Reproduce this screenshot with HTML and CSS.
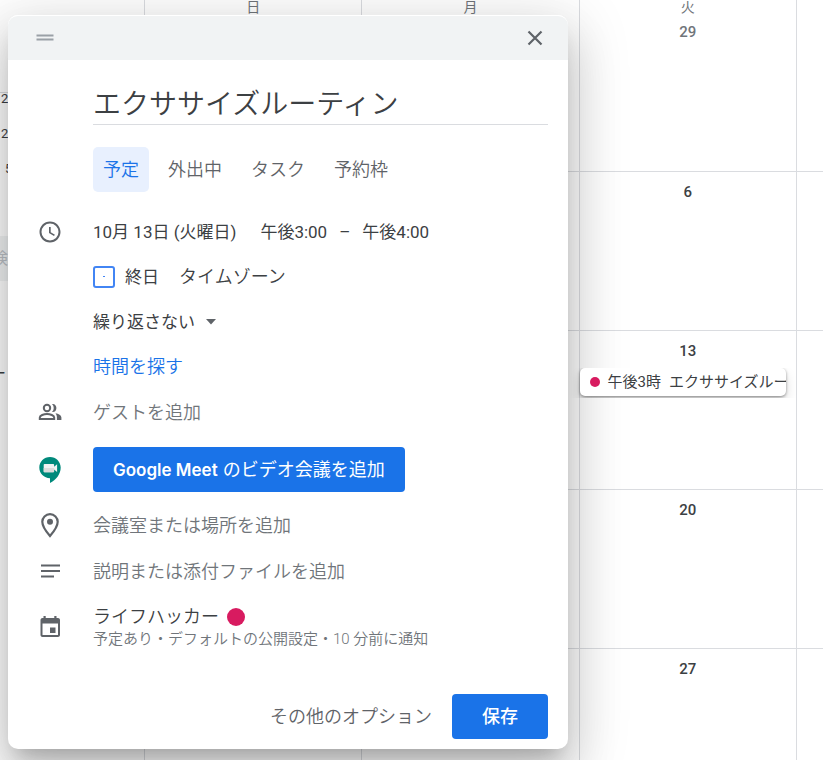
FILE: index.html
```html
<!DOCTYPE html>
<html lang="ja">
<head>
    <meta charset="UTF-8">
    <meta name="viewport" content="width=device-width, initial-scale=1.0">
    <title>カレンダー</title>
    <link rel="stylesheet" href="styles.css">
</head>
<body>
    <div class="app">
        <aside class="sidebar">
            <div class="mini-month">
                <span>2</span>
                <span>2</span>
                <span class="mini-late">5</span>
            </div>
            <input class="people-search" type="text" placeholder="検索" aria-label="検索">
            <div class="sidebar-title">ー</div>
        </aside>

        <main class="month">
            <!-- Week 1 -->
            <div class="week week-first">
                <div class="day"><span class="weekday">日</span></div>
                <div class="day"><span class="weekday">月</span></div>
                <div class="day"><span class="weekday">火</span><span class="date date-other">29</span></div>
                <div class="day"></div>
            </div>
            <!-- Week 2 -->
            <div class="week">
                <div class="day"></div>
                <div class="day"></div>
                <div class="day"><span class="date">6</span></div>
                <div class="day"></div>
            </div>
            <!-- Week 3 -->
            <div class="week">
                <div class="day"></div>
                <div class="day"></div>
                <div class="day">
                    <span class="date">13</span>
                    <button class="event" type="button">
                        <span class="event-dot"></span>
                        <span>午後3時</span>
                        <span class="event-name">エクササイズルーティン</span>
                    </button>
                </div>
                <div class="day"></div>
            </div>
            <!-- Week 4 -->
            <div class="week">
                <div class="day"></div>
                <div class="day"></div>
                <div class="day"><span class="date">20</span></div>
                <div class="day"></div>
            </div>
            <!-- Week 5 -->
            <div class="week week-last">
                <div class="day"></div>
                <div class="day"></div>
                <div class="day"><span class="date">27</span></div>
                <div class="day"></div>
            </div>
        </main>
    </div>

    <form class="popup">
        <header class="popup-bar">
            <svg class="drag" width="18" height="8" viewBox="0 0 18 8" aria-hidden="true">
                <path d="M0.5 1.5h17M0.5 5.5h17" stroke="#9aa0a6" stroke-width="2"/>
            </svg>
            <button class="close" type="button" aria-label="閉じる">
                <svg width="16" height="16" viewBox="0 0 16 16">
                    <path d="M1.500 1.500l13 13M14.500 1.500l-13 13" stroke="#5f6368" stroke-width="2.200"/>
                </svg>
            </button>
        </header>

        <div class="popup-body">
            <div class="indent">
                <input class="title" type="text" value="エクササイズルーティン" aria-label="タイトル">
                <div class="tabs">
                    <button class="tab active" type="button">予定</button>
                    <button class="tab" type="button">外出中</button>
                    <button class="tab" type="button">タスク</button>
                    <button class="tab" type="button">予約枠</button>
                </div>
            </div>

            <div class="row">
                <div class="row-icon">
                    <svg width="24" height="24" viewBox="0 0 24 24" fill="#5f6368">
                        <path d="M12 1.500C6.200 1.500 1.500 6.200 1.500 12S6.200 22.500 12 22.500 22.500 17.800 22.500 12 17.800 1.500 12 1.500zm0 19a8.500 8.500 0 1 1 0-17 8.500 8.500 0 0 1 0 17z"/>
                        <path d="M12.700 7h-1.700v6l5 3.100.900-1.400-4.200-2.500z"/>
                    </svg>
                </div>
                <div class="when">
                    <button class="plain" type="button">10月 13日 (火曜日)</button>
                    <div class="times">
                        <button class="plain" type="button">午後3:00</button>
                        <span class="dash">–</span>
                        <button class="plain" type="button">午後4:00</button>
                    </div>
                </div>
            </div>

            <div class="row indent">
                <label class="all-day">
                    <input type="checkbox">
                    終日
                </label>
                <button class="light" type="button">タイムゾーン</button>
            </div>

            <div class="row indent">
                <div class="repeat">
                    <select aria-label="繰り返し">
                        <option>繰り返さない</option>
                    </select>
                    <svg width="12" height="6" viewBox="0 0 12 6" fill="#5f6368" aria-hidden="true">
                        <path d="M1 0h10L6 5.500z"/>
                    </svg>
                </div>
            </div>

            <div class="row indent">
                <a class="find-time" href="#">時間を探す</a>
            </div>

            <div class="row row-field">
                <div class="row-icon">
                    <svg width="24" height="24" viewBox="0 0 24 24" fill="none" stroke="#5f6368" stroke-width="2">
                        <circle cx="9" cy="8" r="3.200"/>
                        <path d="M1.800 19v-1.500c0-2 4-3.500 7.200-3.500s7.200 1.500 7.200 3.500V19z"/>
                        <path d="M14 4c2.600-.5 4.400 1.500 4.400 4s-1.800 4.500-4.400 4c1.200-1.100 1.700-2.500 1.700-4S15.200 5.100 14 4zM17.500 13.200c3 .5 5.900 2 5.900 4.300V20h-4.500v-2.500c0-1.800-.5-3.200-1.400-4.300z" fill="#5f6368" stroke="none"/>
                    </svg>
                </div>
                <input class="field" type="text" placeholder="ゲストを追加" aria-label="ゲストを追加">
            </div>

            <div class="row row-meet">
                <div class="row-icon">
                    <svg width="24" height="28" viewBox="0 0 24 28">
                        <path d="M12 1C6 1 1.300 5.700 1.300 11.600S6 22.300 12 22.300V27c6-2.800 10.700-8.800 10.700-15.400C22.700 5.700 18 1 12 1z" fill="#00897b"/>
                        <path d="M6.500 8h8.800c.5 0 .8.300.8.800v1.900l3-2.400v7.600l-3-2.400v1.900c0 .5-.3.800-.8.800H6.500c-.5 0-.8-.3-.8-.8V8.800c0-.5.3-.8.800-.8z" fill="#f1f1f1"/>
                        <path d="M5.700 12h10.400v3.400c0 .5-.3.800-.8.800H6.500c-.5 0-.8-.3-.8-.8z" fill="#dcdcdc"/>
                    </svg>
                </div>
                <button class="primary" type="button"><span class="brand">Google Meet</span> のビデオ会議を追加</button>
            </div>

            <div class="row row-field">
                <div class="row-icon">
                    <svg width="24" height="26" viewBox="0 0 24 26">
                        <path d="M12 2.200c-4.300 0-7.700 3.400-7.700 7.600 0 5.500 7.700 14.200 7.700 14.200s7.700-8.700 7.700-14.200c0-4.200-3.400-7.600-7.700-7.600z" fill="none" stroke="#5f6368" stroke-width="2.200"/>
                        <circle cx="12" cy="9.800" r="3" fill="#5f6368"/>
                    </svg>
                </div>
                <input class="field" type="text" placeholder="会議室または場所を追加" aria-label="会議室または場所を追加">
            </div>

            <div class="row row-field">
                <div class="row-icon">
                    <svg width="24" height="24" viewBox="0 0 24 24">
                        <path d="M3 6.500h19M3 12h19M3 17.500h13" stroke="#5f6368" stroke-width="2"/>
                    </svg>
                </div>
                <input class="field" type="text" placeholder="説明または添付ファイルを追加" aria-label="説明または添付ファイルを追加">
            </div>

            <div class="row row-calendar">
                <div class="row-icon">
                    <svg width="24" height="24" viewBox="0 0 24 24" fill="#5f6368">
                        <path d="M20 3h-1.500V1h-2.200v2H7.700V1H5.500v2H4.500c-1.100 0-2 .9-2 2v15c0 1.100.9 2 2 2H20c1.100 0 2-.9 2-2V5c0-1.100-.9-2-2-2zm0 17H4.500V8.500H20z"/>
                        <path d="M12 12.500h5.500V18H12z"/>
                    </svg>
                </div>
                <div class="calendar-info">
                    <div class="calendar-name">ライフハッカー<span class="calendar-color"></span></div>
                    <div class="calendar-note">予定あり・デフォルトの公開設定・10 分前に通知</div>
                </div>
            </div>

            <footer class="actions">
                <button class="more" type="button">その他のオプション</button>
                <button class="primary save" type="submit">保存</button>
            </footer>
        </div>
    </form>
</body>
</html>
```
FILE: styles.css
```css
* {
    margin: 0;
    padding: 0;
    box-sizing: border-box;
}

body {
    height: 100vh;
    overflow: hidden;
    position: relative;
    background-color: #fff;
    color: #3c4043;
    font-family: Roboto, "Noto Sans CJK JP", sans-serif;
    font-size: 18px;
    line-height: 24px;
}

button,
input,
select {
    font: inherit;
    color: inherit;
    background: none;
    border: none;
    outline: none;
}

button {
    cursor: pointer;
    white-space: nowrap;
}

svg {
    display: block;
}

/* Calendar behind the dialog */
.app {
    display: flex;
    height: 100%;
}

.sidebar {
    flex: none;
    width: 144px;
    padding-top: 92px;
}

.mini-month {
    display: flex;
    flex-direction: column;
    gap: 23px;
    padding-left: 1px;
    border-top: 1px solid #dadce0;
    font-size: 13px;
    line-height: 12px;
}

.mini-late {
    padding-left: 4px;
}

.people-search {
    width: 152px;
    height: 45px;
    margin: 61px 0 0 -8px;
    background-color: #f1f3f4;
    font-size: 16px;

    &::placeholder {
        color: #bdc1c6;
    }
}

.sidebar-title {
    margin: 81px 0 0 -10px;
    font-size: 16px;
}

.month {
    flex: 1;
    min-width: 0;
    display: flex;
    flex-direction: column;
}

.week {
    flex: none;
    display: grid;
    grid-template-columns: 32fr 32fr 32fr 4fr;
    height: 159px;
    border-bottom: 1px solid #dadce0;
}

.week-first {
    height: 172px;
}

.week-last {
    flex: 1;
    border-bottom: none;
}

.day {
    display: flex;
    flex-direction: column;
    align-items: center;
    min-width: 0;
    padding-top: 8px;
    border-left: 1px solid #dadce0;
}

.week-first .day {
    padding-top: 0;
}

.weekday {
    height: 20px;
    color: #70757a;
    font-size: 14px;
    line-height: 14px;
}

.date {
    font-size: 15px;
    font-weight: 500;
}

.date-other {
    color: #70757a;
}

.event {
    position: relative;
    z-index: 2;
    align-self: stretch;
    display: flex;
    align-items: center;
    gap: 8px;
    height: 28px;
    margin: 5px 10px 0 0;
    padding-left: 10px;
    overflow: hidden;
    border-radius: 5px;
    background-color: #fff;
    box-shadow: 0 6px 12px rgba(0, 0, 0, 0.15), 0 1px 3px rgba(0, 0, 0, 0.4);
    clip-path: inset(0 -20px -2px -11px);
    font-size: 15px;
}

.event-dot {
    flex: none;
    width: 10px;
    height: 10px;
    border-radius: 50%;
    background-color: #d81b60;
}

.event-name {
    min-width: 0;
    overflow: hidden;
}

/* Event dialog */
.popup {
    position: absolute;
    top: 15px;
    left: 8px;
    z-index: 1;
    width: 560px;
    max-width: calc(100% - 16px);
    border-radius: 10px;
    background-color: #fff;
    box-shadow: 0 30px 48px 4px rgba(0, 0, 0, 0.14), 0 11px 58px 10px rgba(0, 0, 0, 0.12), 0 14px 19px -9px rgba(0, 0, 0, 0.2);
}

.popup-bar {
    display: flex;
    align-items: center;
    justify-content: space-between;
    height: 45px;
    padding: 0 20px 0 28px;
    border-top: 1px solid #fff;
    border-radius: 10px 10px 0 0;
    background-color: #f1f3f4;
}

.close {
    padding: 5px;
}

.popup-body {
    padding: 20px 20px 10px;
}

.indent {
    padding-left: 65px;
}

.title {
    display: block;
    width: 100%;
    height: 45px;
    border-bottom: 1px solid #dadce0;
    font-size: 28px;
    font-weight: 350;
}

.tabs {
    display: flex;
    gap: 9px;
    margin: 22px 0 17px;
}

.tab {
    height: 45px;
    padding: 0 10px;
    border-radius: 5px;
    color: #5f6368;
    font-weight: 350;

    &.active {
        background-color: #e8f0fe;
        color: #1a73e8;
    }
}

.row {
    display: flex;
    align-items: center;
    height: 45px;
}

.row-field {
    height: 46px;
}

.row-icon {
    flex: none;
    width: 65px;
    padding-left: 10px;
}

.when {
    display: flex;
    gap: 24px;
    font-size: 17px;
}

.times {
    display: flex;
    gap: 12px;
}

.light {
    font-weight: 350;
}

.all-day {
    display: flex;
    align-items: center;
    gap: 10px;
    margin-right: 20px;
    font-size: 17px;

    input {
        appearance: none;
        display: grid;
        place-items: center;
        width: 22px;
        height: 22px;
        border: 2px solid #4285f4;
        border-radius: 3px;
    }

    input::after {
        content: "";
        width: 2px;
        height: 1px;
        background-color: #4285f4;
    }
}

.repeat {
    display: flex;
    align-items: center;
    gap: 10px;
    font-size: 17px;

    select {
        appearance: none;
    }
}

.find-time {
    color: #1a73e8;
    font-weight: 350;
    text-decoration: none;
}

.field {
    flex: 1;
    min-width: 0;
    height: 45px;
    font-weight: 350;

    &::placeholder {
        color: #70757a;
    }
}

.primary {
    height: 45px;
    padding: 0 20px;
    border-radius: 4px;
    background-color: #1a73e8;
    color: #fff;
    font-family: Inter, "Noto Sans CJK JP", sans-serif;
}

.brand {
    font-size: 17px;
    font-weight: 600;
}

.row-meet {
    margin: 12px 0 10px;
}

.row-calendar {
    margin-top: 10px;
}

.calendar-name {
    display: flex;
    align-items: center;
    gap: 8px;
    font-weight: 350;
}

.calendar-color {
    width: 18px;
    height: 18px;
    border-radius: 50%;
    background-color: #d81b60;
}

.calendar-note {
    color: #70757a;
    font-size: 15px;
    font-weight: 350;
    line-height: 20px;
}

.actions {
    display: flex;
    justify-content: flex-end;
    margin-top: 45px;
}

.more {
    padding: 0 20px;
    color: #5f6368;
    font-weight: 350;
}

.save {
    padding: 0 30px;
    font-weight: 500;
}
```
